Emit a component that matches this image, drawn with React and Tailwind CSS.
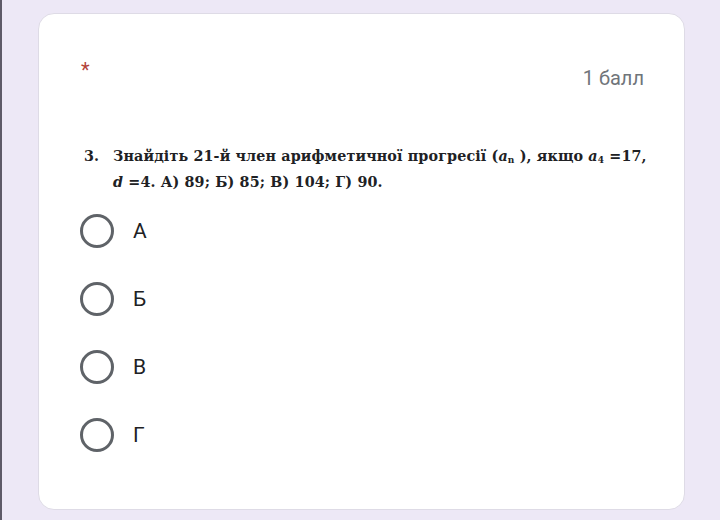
import React from 'react';

const options = ['А', 'Б', 'В', 'Г'];

const Radio = () => (
  <span className="block w-[34px] h-[34px] rounded-full border-[3px] border-[#5f6368] shrink-0" />
);

export default function App() {
  return (
    <div className="w-[720px] h-[520px] bg-[#ede8f6] border-l-2 border-[#5e5a68] pt-[13px] pl-[36px] overflow-hidden">
      <div
        className="w-[647px] h-[497px] bg-white rounded-[16px] border border-[#dedbe6] pl-[41px] pr-[40px] pt-[46px]"
        style={{ fontFamily: 'Roboto, "Noto Sans", sans-serif' }}
      >
        {/* Шапка питання */}
        <div className="flex justify-between items-start h-[42px]">
          <span className="text-[#b3443a] text-[20px] leading-none ml-[1px]">*</span>
          <span className="text-[#70757a] text-[20px] leading-none mt-[8px]">1 балл</span>
        </div>

        {/* Текст завдання */}
        <div
          className="mt-[41px] ml-[4px] text-[#202124] font-bold text-[14.3px] leading-[26px] tracking-[0.14px] whitespace-nowrap"
          style={{ fontFamily: '"DejaVu Serif", "Liberation Serif", serif' }}
        >
          <div className="flex">
            <span className="w-[29px] shrink-0">3.</span>
            <span>
              Знайдіть 21-й член арифметичної прогресії (<i>a</i>
              <sub className="text-[9px]">n</sub>&nbsp;), якщо <i>a</i>
              <sub className="text-[9px]">4</sub> =17,
            </span>
          </div>
          <div className="pl-[29px]">
            <i>d</i> =4. А) 89; Б) 85; В) 104; Г) 90.
          </div>
        </div>

        {/* Варіанти відповіді */}
        <div className="mt-[19px] flex flex-col gap-[34px]">
          {options.map((o) => (
            <label key={o} className="flex items-center gap-[19px] h-[34px]">
              <Radio />
              <span className="text-[#202124] text-[21px] leading-none">{o}</span>
            </label>
          ))}
        </div>
      </div>
    </div>
  );
}
